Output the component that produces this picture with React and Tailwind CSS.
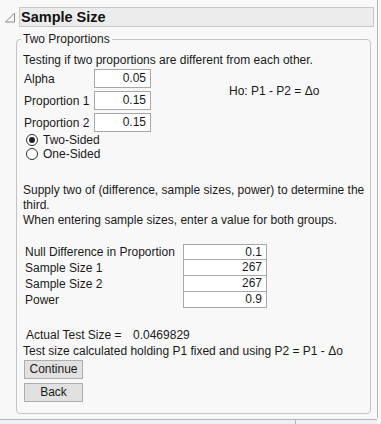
export default function App() {
  const field = "h-[19px] border border-[#a8a8a8] bg-white text-right pr-[4px] leading-[17px]";
  const tableRows = [
    ["Null Difference in Proportion", "0.1"],
    ["Sample Size 1", "267"],
    ["Sample Size 2", "267"],
    ["Power", "0.9"],
  ];

  return (
    <div className="w-[381px] h-[424px] bg-[#f8f8f8] relative overflow-hidden text-[12px] text-[#1a1a1a] font-['Liberation_Sans',Arial,sans-serif] whitespace-nowrap">
      <div className="absolute right-[3px] top-0 bottom-[6px] w-px bg-[#b4b4b4]" />
      <div className="pl-[3px] pt-[7px] pr-[7px]">
        <div className="flex items-center">
          <svg width="14" height="14" viewBox="0 0 14 14" className="mr-[2px]">
            <path d="M11.5 3 L11.5 12 L2.5 12 Z" fill="none" stroke="#8a8a8a" strokeWidth="1" />
          </svg>
          <div className="flex-1 h-[20px] bg-[#ececec] border border-[#c8c8c8] flex items-center pl-[1px]">
            <span className="font-bold text-[14.5px] leading-none text-[#111]">Sample Size</span>
          </div>
        </div>

        <div className="relative ml-[13px] mr-[3px] mt-[12px] border border-[#c4c4c4] rounded-[4px] h-[375px] px-[6px] pt-[12px]">
          <span className="absolute left-[4px] top-[-9px] bg-[#f8f8f8] px-[2px] leading-[16px]">Two Proportions</span>
          <div className="leading-[16px]">Testing if two proportions are different from each other.</div>

          <div className="flex mt-[1px]">
            <div className="flex flex-col gap-[3px]">
              {[["Alpha", "0.05"], ["Proportion 1", "0.15"], ["Proportion 2", "0.15"]].map(([l, v]) => (
                <div key={l} className="flex items-center h-[19px]">
                  <span className="w-[71px] pl-[1px]">{l}</span>
                  <div className={field + " w-[57px]"}>{v}</div>
                </div>
              ))}
            </div>
            <div className="ml-[78px] mt-[14px] leading-[16px]">Ho: P1 - P2 = Δo</div>
          </div>

          <div className="mt-[1px] flex flex-col">
            <label className="flex items-center h-[14px] gap-[5px] pl-[3px]">
              <span className="w-[12px] h-[12px] rounded-full border border-[#333] bg-white flex items-center justify-center">
                <span className="w-[6px] h-[6px] rounded-full bg-[#222]" />
              </span>
              Two-Sided
            </label>
            <label className="flex items-center h-[14px] gap-[5px] pl-[3px]">
              <span className="w-[12px] h-[12px] rounded-full border border-[#333] bg-white" />
              One-Sided
            </label>
          </div>

          <div className="mt-[22px] leading-[15px]">
            Supply two of (difference, sample sizes, power) to determine the
            <br />
            third.
            <br />
            When entering sample sizes, enter a value for both groups.
          </div>

          <div className="mt-[16px] ml-[2px] flex flex-col">
            {tableRows.map(([l, v], i) => (
              <div key={l} className="flex h-[16px]">
                <span className="w-[158px] leading-[16px]">{l}</span>
                <div className={"w-[84px] h-[16px] border border-[#a8a8a8] bg-white text-right pr-[4px] leading-[14px]" + (i > 0 ? " border-t-0" : "")}>
                  {v}
                </div>
              </div>
            ))}
          </div>

          <div className="mt-[19px] ml-[3px] flex leading-[16px]">
            <span className="w-[107px]">Actual Test Size =</span>
            <span>0.0469829</span>
          </div>
          <div className="leading-[16px]">Test size calculated holding P1 fixed and using P2 = P1 - Δo</div>

          <div className="mt-[1px] flex flex-col gap-[4px] ml-[1px]">
            <button className="w-[59px] h-[19px] bg-[#e1e1e1] border border-[#adadad] leading-[17px]">Continue</button>
            <button className="w-[59px] h-[19px] bg-[#e1e1e1] border border-[#adadad] leading-[17px]">Back</button>
          </div>
        </div>
      </div>
      <div className="absolute left-0 right-[4px] bottom-0 h-[5px] bg-[#f0f0f0] border-t border-[#a9b3c4] flex">
        <div className="ml-[295px] w-px bg-[#b4b4b4]" />
      </div>
    </div>
  );
}
